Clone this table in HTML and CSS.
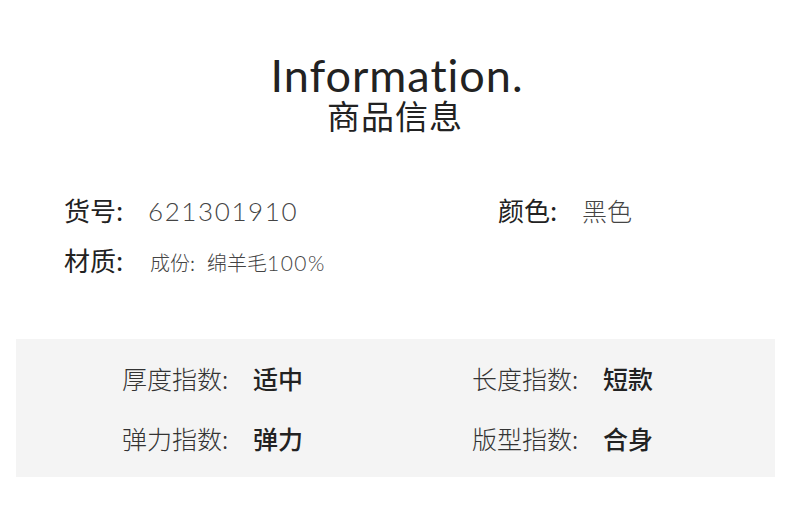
FILE: index.html
```html
<!DOCTYPE html>
<html>
<head>
<meta charset="utf-8">
<link rel="stylesheet" href="styles.css">
</head>
<body>
<div class="page">
  <header class="head">
    <div class="en">Information.</div>
    <div class="cn">商品信息</div>
  </header>
  <section class="basic">
    <div class="row">
      <div class="item w1"><span class="k">货号:</span><span class="v num">621301910</span></div>
      <div class="item"><span class="k">颜色:</span><span class="v">黑色</span></div>
    </div>
    <div class="row">
      <div class="item"><span class="k">材质:</span><span class="v small">成份:</span><span class="v small mat">绵羊毛<span class="pct">100%</span></span></div>
    </div>
  </section>
  <section class="panel">
    <div class="grid">
      <div class="cell"><span class="lab">厚度指数:</span><span class="val">适中</span></div>
      <div class="cell"><span class="lab">长度指数:</span><span class="val">短款</span></div>
      <div class="cell"><span class="lab">弹力指数:</span><span class="val">弹力</span></div>
      <div class="cell"><span class="lab">版型指数:</span><span class="val">合身</span></div>
    </div>
  </section>
</div>
</body>
</html>
```

FILE: styles.css
```css
html, body {
  margin: 0;
  padding: 0;
  background: #fff;
}
.page {
  width: 790px;
  height: 510px;
  font-family: "Noto Sans CJK SC", "Noto Sans", sans-serif;
  color: #222;
}
.head {
  display: flex;
  flex-direction: column;
  align-items: center;
  padding-top: 54px;
}
.en {
  font-family: "Lato", "Noto Sans", sans-serif;
  font-size: 45px;
  line-height: 42px;
  letter-spacing: 1px;
  color: #222;
  padding-left: 4px;
}
.cn {
  font-size: 33px;
  line-height: 38px;
  margin-top: 0;
  letter-spacing: 1px;
}
.basic {
  padding: 57px 0 0 64px;
  display: flex;
  flex-direction: column;
  gap: 12px;
}
.row {
  display: flex;
  align-items: baseline;
  height: 38px;
}
.item {
  display: flex;
  align-items: baseline;
}
.w1 {
  width: 434px;
}
.k {
  font-size: 26px;
  font-weight: 400;
  color: #222;
  width: 84px;
}
.v {
  font-size: 25px;
  font-weight: 300;
  color: #444;
}
.num {
  font-family: "Lato", sans-serif;
  font-size: 26px;
  font-weight: 300;
  letter-spacing: 1.6px;
}
.small {
  font-size: 20px;
  padding-left: 2px;
}
.mat {
  margin-left: 10px;
}
.pct {
  font-family: "Lato", sans-serif;
  font-weight: 300;
  letter-spacing: 1.5px;
  font-size: 21px;
}
.panel {
  margin: 60px 15px 0 16px;
  height: 138px;
  background: #f4f4f4;
  display: flex;
  align-items: center;
}
.grid {
  display: grid;
  grid-template-columns: 350px 300px;
  row-gap: 24px;
  padding-left: 106px;
}
.cell {
  display: flex;
  align-items: baseline;
  font-size: 25px;
  line-height: 36px;
}
.lab {
  font-weight: 300;
  color: #333;
  width: 131px;
}
.val {
  font-weight: 500;
  color: #222;
}
```
